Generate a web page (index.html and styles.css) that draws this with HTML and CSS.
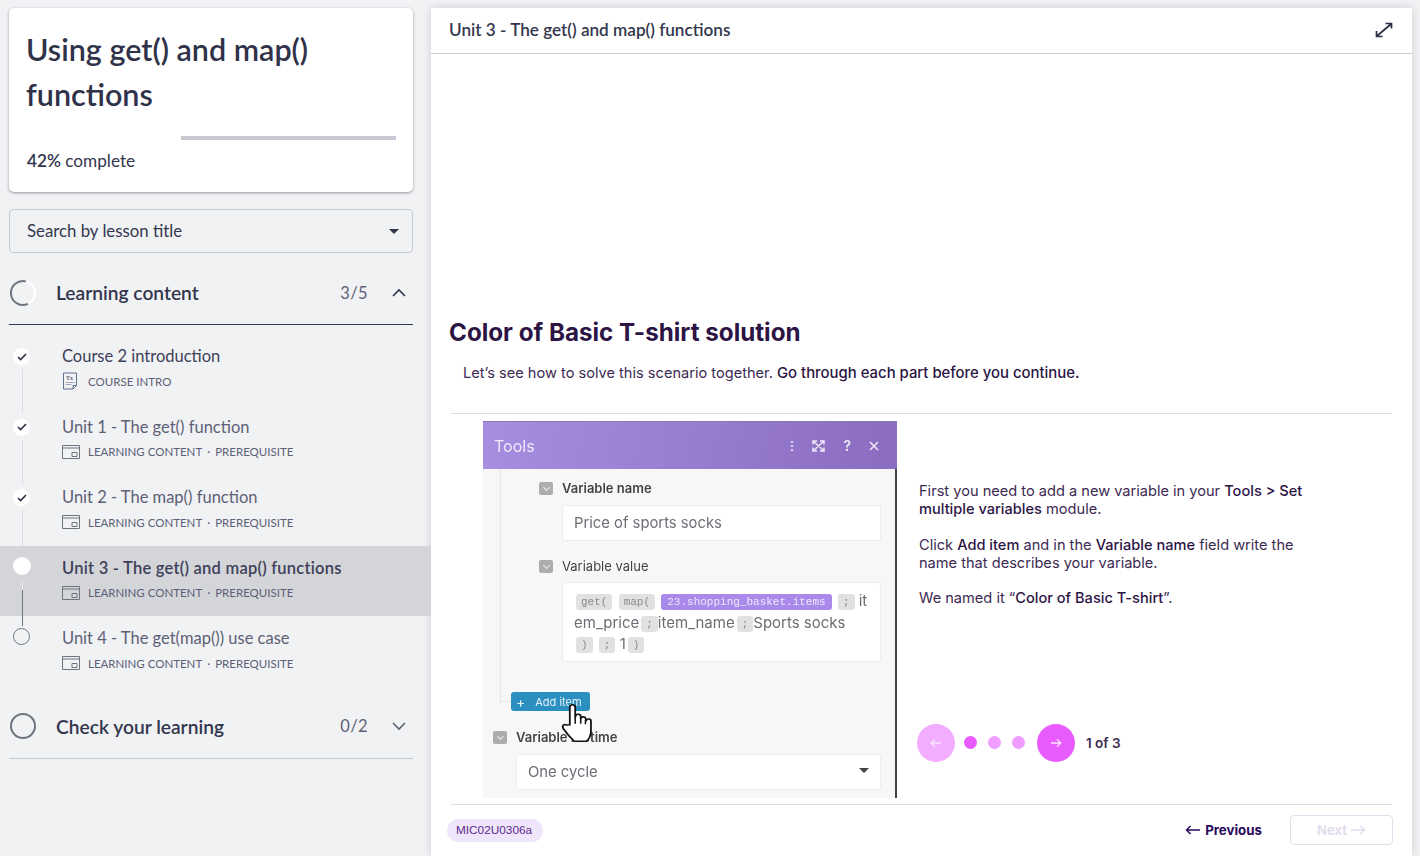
FILE: index.html
```html
<!DOCTYPE html>
<html>

<head>
  <title>Using get() and map() functions</title>
  <meta name="viewport" content="width=device-width, initial-scale=1">
  <link rel="stylesheet" href="styles.css">
</head>

<body>
  <div class="app">
    <aside class="sidebar">
      <div class="course-card">
        <h1>Using get() and map() functions</h1>
        <div class="progress">
          <div class="progress-fill"></div>
        </div>
        <p class="progress-text"><b>42%</b> complete</p>
      </div>

      <div class="search">
        <span>Search by lesson title</span>
        <span class="caret"></span>
      </div>

      <div class="section-head open">
        <svg class="ring" width="28" height="28" viewBox="0 0 28 28">
          <circle cx="14" cy="14" r="12" fill="none" stroke="#fff" stroke-width="2" />
          <path d="M17 2.400A12 12 0 1 0 19 24.900" fill="none" stroke="#70727f" stroke-width="2" />
        </svg>
        <span class="section-title">Learning content</span>
        <span class="section-count">3/5</span>
        <svg class="chevron" width="16" height="10" viewBox="0 0 16 10">
          <path d="M2 8l6-6 6 6" fill="none" stroke="#33364d" stroke-width="1.6" />
        </svg>
      </div>

      <ul class="lessons">
        <li class="lesson done first">
          <span class="dot"><svg width="10" height="8" viewBox="0 0 10 8"><path d="M1 4l2.600 2.600L9 1" fill="none" stroke="#2c2f45" stroke-width="1.6" /></svg></span>
          <p class="lesson-title">Course 2 introduction</p>
          <p class="lesson-meta">
            <svg class="doc" width="16" height="18" viewBox="0 0 16 18">
              <path d="M1.500 1h13v12.500L11 17H1.500z" fill="none" stroke="#5d7290" />
              <path d="M11 17v-3.500h3.500" fill="none" stroke="#5d7290" />
              <text x="4" y="8" class="tx">Tx</text>
              <path d="M3.500 10.500h9M3.500 12.500h6" stroke="#a6a8b6" />
            </svg>
            <span>COURSE INTRO</span>
          </p>
        </li>
        <li class="lesson done">
          <span class="dot"><svg width="10" height="8" viewBox="0 0 10 8"><path d="M1 4l2.600 2.600L9 1" fill="none" stroke="#2c2f45" stroke-width="1.6" /></svg></span>
          <p class="lesson-title">Unit 1 - The get() function</p>
          <p class="lesson-meta">
            <svg class="screen" width="18" height="14" viewBox="0 0 18 14"><path d="M.5.5h17v13H.5zM.5 3h17M10 7.500h5v4h-5z" fill="none" stroke="#70727f" /></svg>
            <span>LEARNING CONTENT<i class="sep">·</i>PREREQUISITE</span>
          </p>
        </li>
        <li class="lesson done">
          <span class="dot"><svg width="10" height="8" viewBox="0 0 10 8"><path d="M1 4l2.600 2.600L9 1" fill="none" stroke="#2c2f45" stroke-width="1.6" /></svg></span>
          <p class="lesson-title">Unit 2 - The map() function</p>
          <p class="lesson-meta">
            <svg class="screen" width="18" height="14" viewBox="0 0 18 14"><path d="M.5.5h17v13H.5zM.5 3h17M10 7.500h5v4h-5z" fill="none" stroke="#70727f" /></svg>
            <span>LEARNING CONTENT<i class="sep">·</i>PREREQUISITE</span>
          </p>
        </li>
        <li class="lesson current">
          <span class="dot"></span>
          <p class="lesson-title">Unit 3 - The get() and map() functions</p>
          <p class="lesson-meta">
            <svg class="screen" width="18" height="14" viewBox="0 0 18 14"><path d="M.5.5h17v13H.5zM.5 3h17M10 7.500h5v4h-5z" fill="none" stroke="#70727f" /></svg>
            <span>LEARNING CONTENT<i class="sep">·</i>PREREQUISITE</span>
          </p>
        </li>
        <li class="lesson todo">
          <span class="dot"></span>
          <p class="lesson-title">Unit 4 - The get(map()) use case</p>
          <p class="lesson-meta">
            <svg class="screen" width="18" height="14" viewBox="0 0 18 14"><path d="M.5.5h17v13H.5zM.5 3h17M10 7.500h5v4h-5z" fill="none" stroke="#70727f" /></svg>
            <span>LEARNING CONTENT<i class="sep">·</i>PREREQUISITE</span>
          </p>
        </li>
      </ul>

      <div class="section-head closed">
        <svg class="ring" width="28" height="28" viewBox="0 0 28 28">
          <circle cx="14" cy="14" r="12" fill="none" stroke="#70727f" stroke-width="2" />
        </svg>
        <span class="section-title">Check your learning</span>
        <span class="section-count">0/2</span>
        <svg class="chevron" width="16" height="10" viewBox="0 0 16 10">
          <path d="M2 2l6 6 6-6" fill="none" stroke="#5d6076" stroke-width="1.6" />
        </svg>
      </div>
    </aside>

    <main class="main">
      <header class="main-head">
        <span>Unit 3 - The get() and map() functions</span>
        <svg width="18" height="16" viewBox="0 0 18 16">
          <path d="M2 14L16 2M10.500 1.500h6v5M1.500 9v5.500h6" fill="none" stroke="#2b2e45" stroke-width="1.700" />
        </svg>
      </header>

      <div class="lesson-body">
        <h2>Color of Basic T-shirt solution</h2>
        <p class="intro">Let’s see how to solve this scenario together. <strong>Go through each part before you continue.</strong></p>

        <div class="slide">
          <div class="shot">
            <div class="shot-bar">
              <span class="shot-title">Tools</span>
              <span class="shot-icons">
                <svg width="4" height="12" viewBox="0 0 4 12"><path d="M2 1v1.500M2 5.200v1.500M2 9.500v1.500" stroke="#efe9fa" stroke-width="2.400" /></svg>
                <svg width="13" height="12" viewBox="0 0 13 12"><path d="M1 1l11 10M12 1L1 11M1 4.500V1h4M8 1h4v3.500M1 7.500V11h4M8 11h4V7.500" fill="none" stroke="#efe9fa" stroke-width="1.500" /></svg>
                <span class="shot-help">?</span>
                <svg width="10" height="10" viewBox="0 0 10 10"><path d="M1 1l8 8M9 1L1 9" stroke="#efe9fa" stroke-width="1.500" /></svg>
              </span>
            </div>
            <div class="shot-body">
              <div class="shot-tree">
                <div class="field-label"><span class="toggle"></span><b>Variable name</b></div>
                <div class="field-box">Price of sports socks</div>
                <div class="field-label second"><span class="toggle"></span>Variable value</div>
                <div class="field-box tokens">
                  <span class="token">get(</span> <span class="token">map(</span> <span class="token purple">23.shopping_basket.items</span> <span class="token">;</span> it<br>em_price<span class="token">;</span>item_name<span class="token">;</span>Sports socks<br><span class="token">)</span> <span class="token">;</span> 1<span class="token">)</span>
                </div>
              </div>
              <div class="add-item"><span class="plus">+</span>Add item</div>
              <div class="field-label outer"><span class="toggle"></span><b>Variable lifetime</b></div>
              <div class="field-box outer-box">One cycle<span class="mini-caret"></span></div>
              <svg class="hand" width="41" height="41" viewBox="0 0 32 36" preserveAspectRatio="none">
                <path d="M10 20V4.500a2 2 0 0 1 4.200 0V14l.3-1.500a2 2 0 0 1 4 .5v2l.3-1a2 2 0 0 1 3.700.8v2l.4-.8a1.900 1.900 0 0 1 3.600 1V26c0 4-2 7.500-4 8.500H13.500c-2-2-5-5.500-8.500-11-1.500-2.500.5-4.500 2.500-3.300z" fill="#fff" stroke="#111" stroke-width="1.400" />
                <path d="M14.200 14v5M18.500 15v4M22.200 16v3.500" stroke="#111" stroke-width="1.200" />
              </svg>
            </div>
          </div>

          <div class="slide-text">
            <p>First you need to add a new variable in your <strong>Tools &gt; Set multiple variables</strong> module.</p>
            <p>Click <strong>Add item</strong> and in the <strong>Variable name</strong> field write the name that describes your variable.</p>
            <p>We named it “<strong>Color of Basic T-shirt</strong>”.</p>
            <div class="stepper">
              <span class="step-btn off"><svg width="12" height="10" viewBox="0 0 12 10"><path d="M11 5H1.500M5 1.200L1.200 5 5 8.800" fill="none" stroke="#fbe3ff" stroke-width="1.300" /></svg></span>
              <span class="step-dot on"></span>
              <span class="step-dot"></span>
              <span class="step-dot"></span>
              <span class="step-btn"><svg width="12" height="10" viewBox="0 0 12 10"><path d="M1 5h9.500M7 1.200L10.800 5 7 8.800" fill="none" stroke="#fbe3ff" stroke-width="1.300" /></svg></span>
              <span class="step-label">1 of 3</span>
            </div>
          </div>
        </div>

        <footer class="foot">
          <span class="code-pill">MIC02U0306a</span>
          <span class="prev">
            <svg width="15" height="10" viewBox="0 0 15 10"><path d="M15 5H1.500M5.500 1L1.500 5l4 4" fill="none" stroke="#2a0a5e" stroke-width="1.500" /></svg>
            Previous
          </span>
          <span class="next">
            Next
            <svg width="15" height="10" viewBox="0 0 15 10"><path d="M0 5h13.500M9.500 1l4 4-4 4" fill="none" stroke="#e4dded" stroke-width="1.500" /></svg>
          </span>
        </footer>
      </div>
    </main>
  </div>
</body>

</html>
```
FILE: styles.css
```css
html {
  font-family: Lato, "Noto Sans", sans-serif;
}

body {
  margin: 0;
  height: 856px;
  overflow: hidden;
  background-color: #f1f2f4;
  color: #33364d;
}

p,
h1,
h2,
ul {
  margin: 0;
  padding: 0;
}

.app {
  display: flex;
  height: 856px;
}

/* left column */
.sidebar {
  width: 404px;
  flex: none;
  padding: 8px 18px 0 9px;
}

.course-card {
  height: 184px;
  box-sizing: border-box;
  padding: 19px 17px 0 18px;
  background-color: white;
  border-radius: 5px;
  box-shadow: 0 1px 3px rgba(40, 40, 60, .45);
}

.course-card h1 {
  margin-left: -1px;
  font-size: 30.500px;
  line-height: 45px;
  font-weight: 600;
  color: #2f3249;
}

.progress {
  height: 4px;
  margin-top: 19px;
  background-color: #c6c8d2;
}

.progress-fill {
  width: 41.800%;
  height: 4px;
  background-color: white;
}

.progress-text {
  margin-top: 10px;
  font-size: 17.200px;
  line-height: 22px;
}

.progress-text b {
  font-weight: 600;
}

.search {
  display: flex;
  justify-content: space-between;
  align-items: center;
  height: 40px;
  margin-top: 17px;
  padding: 0 13px 2px 17px;
  border: 1px solid #c6c8d2;
  border-radius: 4px;
  font-size: 16.800px;
}

.caret {
  width: 0;
  height: 0;
  margin-top: 2px;
  border-left: 5px solid transparent;
  border-right: 5px solid transparent;
  border-top: 5px solid #33364d;
}

.section-head {
  display: flex;
  align-items: center;
  box-sizing: border-box;
  padding-top: 8px;
  color: #33364d;
}

.section-head.open {
  height: 72px;
  border-bottom: 1px solid #33364d;
}

.section-head.closed {
  height: 72px;
  border-bottom: 1px solid #c6c8d2;
}

.ring {
  margin-right: 19px;
}

.section-title {
  flex: 1;
  font-size: 19.200px;
  font-weight: 600;
}

.section-count {
  margin-right: 23px;
  font-size: 16.500px;
  letter-spacing: .4px;
  color: #5d6076;
}

.chevron {
  margin-right: 6px;
}

.lessons {
  list-style: none;
  margin: 9px -18px 0 -9px;
}

.lesson {
  position: relative;
  height: 70.500px;
  box-sizing: border-box;
  padding: 10px 0 0 62px;
  color: #5d6076;
}

.lesson::after {
  content: "";
  position: absolute;
  left: 22px;
  top: 35px;
  height: 44px;
  border-left: 1px solid #dcdde2;
}

.lesson.todo::after {
  display: none;
}

.lesson.first {
  color: #3d4058;
}

.lesson.current {
  background-color: #d4d5d9;
  color: #3d4058;
}

.lesson.current::before {
  content: "";
  position: absolute;
  left: 22px;
  top: 35px;
  height: 9px;
  border-left: 1px solid #e6e7ea;
}

.lesson.current::after {
  top: 44px;
  height: 36px;
  border-left-color: #70727f;
  z-index: 1;
}

.dot {
  position: absolute;
  left: 13px;
  top: 14px;
  display: flex;
  align-items: center;
  justify-content: center;
  width: 17px;
  height: 17px;
  border-radius: 50%;
  background-color: white;
}

.lesson.todo .dot {
  top: 12px;
  box-sizing: border-box;
  background: none;
  border: 1px solid #70727f;
}

.lesson.current .dot {
  top: 11px;
  width: 18px;
  height: 18px;
}

.lesson-title {
  font-size: 16.500px;
  line-height: 24px;
}

.lesson.current .lesson-title {
  font-weight: 600;
  letter-spacing: .24px;
}

.lesson-meta {
  display: flex;
  align-items: center;
  height: 20px;
  margin-top: 3px;
  font-size: 11.500px;
  color: #5d6076;
}

.lesson-meta svg {
  margin-right: 8px;
}

.lesson-meta .doc {
  margin-right: 10px;
}

.sep {
  margin: 0 5px;
  font-style: normal;
}

.tx {
  font: 700 6px "Liberation Serif", serif;
  fill: #5d6076;
}

/* right column */
.main {
  flex: none;
  width: 981px;
  height: 848px;
  margin-top: 8px;
  background-color: white;
  box-shadow: 0 0 8px rgba(60, 60, 70, .2);
}

.main-head {
  display: flex;
  justify-content: space-between;
  align-items: center;
  height: 43px;
  padding: 0 19px 2px 18px;
  border-bottom: 1px solid #c9cad3;
  font-size: 17.150px;
  font-weight: 600;
  color: #33364d;
}

.lesson-body {
  padding: 263px 20px 0 20px;
  font-family: Inter, Roboto, sans-serif;
}

.lesson-body h2 {
  margin-left: -2px;
  font-size: 24.200px;
  line-height: 32px;
  font-weight: 700;
  color: #2c1445;
}

.intro {
  margin: 14px 0 0 12px;
  font-size: 14.600px;
  line-height: 20px;
  color: #3c2a52;
}

.intro strong {
  font-size: 14.900px;
}

.intro strong,
.slide-text strong {
  font-weight: 500;
  color: #2c1445;
}

.slide {
  display: flex;
  height: 392px;
  margin-top: 30px;
  padding-top: 7px;
  box-sizing: border-box;
  border-top: 1px solid #e2dbde;
  border-bottom: 1px solid #e2dbde;
}

.shot {
  flex: none;
  width: 414px;
  height: 377px;
  margin-left: 32px;
  box-sizing: border-box;
  border-right: 2px solid #444;
  background-color: #f7f7f7;
  filter: blur(.3px);
}

.shot-bar {
  display: flex;
  justify-content: space-between;
  align-items: center;
  height: 48px;
  padding: 0 16px 0 11px;
  margin-right: -2px;
  border-top: 1px solid #8a78b0;
  box-sizing: border-box;
  background: linear-gradient(100deg, #a78ee0, #8a6cc0);
  color: #efe9fa;
}

.shot-title {
  font-size: 16px;
}

.shot-icons {
  display: flex;
  align-items: center;
  gap: 18px;
  margin-right: 2px;
}

.shot-help {
  font-size: 14px;
  font-weight: 600;
}

.shot-body {
  position: relative;
  font-size: 13px;
  color: #444;
}

.shot-tree {
  height: 223px;
  margin-left: 17px;
  padding: 11px 0 0 38px;
  border-left: 1px solid #e6e6e6;
}

.field-label {
  display: flex;
  align-items: center;
  height: 16px;
}

.field-label b {
  font-weight: 600;
}

.field-label.second {
  margin-top: 17px;
}

.toggle {
  display: flex;
  justify-content: center;
  width: 14px;
  height: 13px;
  margin-right: 9px;
  border-radius: 2px;
  background-color: #adadad;
}

.toggle::after {
  content: "";
  width: 4px;
  height: 4px;
  margin-top: 3px;
  border-right: 1.500px solid #eee;
  border-bottom: 1.500px solid #eee;
  transform: rotate(45deg);
}

.field-box {
  width: 319px;
  margin: 9px 0 0 23px;
  padding: 0 11px;
  box-sizing: border-box;
  height: 36px;
  line-height: 34px;
  border: 1px solid #ececec;
  border-radius: 3px;
  background-color: white;
  font-size: 14.800px;
  color: #6b6e74;
}

.field-box.tokens {
  height: 80px;
  margin-top: 8px;
  padding: 7px 0 0 11px;
  line-height: 21.500px;
  font-size: 15px;
  white-space: nowrap;
}

.token {
  display: inline-block;
  margin: 0 0 0 2px;
  padding: 0 5px;
  height: 16px;
  line-height: 16px;
  border-radius: 3px;
  background-color: #e1e1e1;
  font-family: "Liberation Mono", monospace;
  font-size: 11px;
  color: #8a8a8a;
  vertical-align: 1px;
}

.token.purple {
  padding: 0 6px;
  background-color: #a98aea;
  color: #f0e8ff;
}

.add-item {
  position: relative;
  display: flex;
  align-items: center;
  width: 79px;
  height: 19px;
  box-sizing: border-box;
  margin: -11px 0 0 28px;
  padding-left: 5px;
  border-radius: 3px;
  background-color: #2b8fc0;
  font-size: 11px;
  color: #e8f4fa;
}

.add-item::before {
  content: "";
  position: absolute;
  left: -11px;
  top: 9px;
  width: 11px;
  border-top: 1px solid #e6e6e6;
}

.plus {
  margin-right: 10px;
  font-size: 14px;
}

.field-label.outer {
  margin: 18px 0 0 10px;
}

.outer-box {
  position: relative;
  width: 365px;
  margin: 9px 0 0 33px;
}

.mini-caret {
  position: absolute;
  right: 11px;
  top: 13px;
  width: 0;
  height: 0;
  border-left: 5px solid transparent;
  border-right: 5px solid transparent;
  border-top: 5px solid #444;
}

.hand {
  position: absolute;
  left: 74px;
  top: 233px;
}

.slide-text {
  flex: 1;
  display: flex;
  flex-direction: column;
  padding: 61px 88px 0 22px;
  font-size: 14.600px;
  line-height: 18px;
  color: #3c2a52;
}

.slide-text p {
  margin-bottom: 17.500px;
}

.stepper {
  display: flex;
  align-items: center;
  margin-top: 99px;
  margin-left: -2px;
}

.step-btn {
  display: flex;
  align-items: center;
  justify-content: center;
  width: 38px;
  height: 38px;
  border-radius: 50%;
  background-color: #e95bff;
}

.step-btn.off {
  background-color: #f3adff;
}

.step-dot {
  width: 13px;
  height: 13px;
  margin-left: 11px;
  border-radius: 50%;
  background-color: #f09dff;
}

.step-dot.on {
  margin-left: 9px;
  background-color: #e95bff;
}

.step-dot + .step-btn {
  margin-left: 12px;
}

.step-label {
  margin-left: 11px;
  font-size: 13.500px;
  font-weight: 600;
  color: #3c2a52;
}

.foot {
  display: flex;
  align-items: center;
  height: 50px;
  margin: 0 -1px 0 -4px;
}

.code-pill {
  padding: 0 11px 0 9px;
  height: 23px;
  line-height: 23px;
  border-radius: 12px;
  background-color: #f0e6fb;
  font-family: "Liberation Sans", sans-serif;
  font-size: 11.800px;
  color: #5b2a8c;
}

.prev {
  display: flex;
  align-items: center;
  gap: 5px;
  margin-left: auto;
  font-size: 13.300px;
  font-weight: 700;
  color: #2a0a5e;
}

.next {
  display: flex;
  align-items: center;
  justify-content: center;
  gap: 4px;
  width: 103px;
  height: 30px;
  box-sizing: border-box;
  margin-left: 28px;
  border: 1px solid #e4dded;
  border-radius: 4px;
  font-size: 13px;
  font-weight: 700;
  color: #e4dded;
}
```
